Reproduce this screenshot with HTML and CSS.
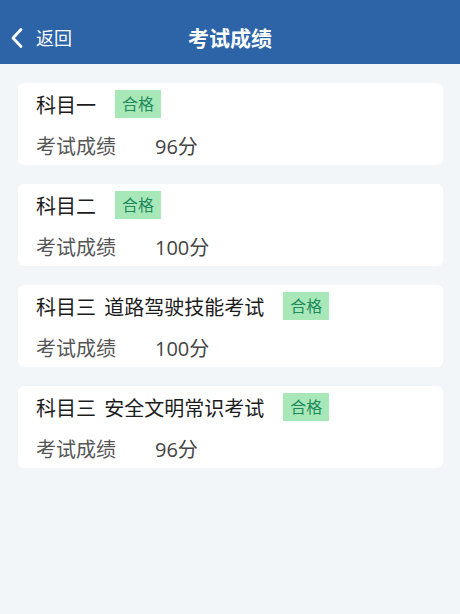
FILE: index.html
```html
<!DOCTYPE html>
<html lang="zh">
<head>
<meta charset="utf-8">
<title>考试成绩</title>
<link rel="stylesheet" href="styles.css">
</head>
<body>
<header class="topbar">
  <div class="back">
    <svg class="chev" width="16" height="22" viewBox="0 0 16 22"><path d="M12 2.5 L4 11 L12 19.5" fill="none" stroke="#fff" stroke-width="2.8" stroke-linecap="round" stroke-linejoin="round"/></svg>
    <span class="back-text">返回</span>
  </div>
  <h1 class="title">考试成绩</h1>
</header>
<main class="list">
  <section class="card">
    <div class="row1"><span class="subject">科目一</span><span class="badge">合格</span></div>
    <div class="row2"><span class="label">考试成绩</span><span class="score">96分</span></div>
  </section>
  <section class="card">
    <div class="row1"><span class="subject">科目二</span><span class="badge">合格</span></div>
    <div class="row2"><span class="label">考试成绩</span><span class="score">100分</span></div>
  </section>
  <section class="card">
    <div class="row1"><span class="subject">科目三 道路驾驶技能考试</span><span class="badge">合格</span></div>
    <div class="row2"><span class="label">考试成绩</span><span class="score">100分</span></div>
  </section>
  <section class="card">
    <div class="row1"><span class="subject">科目三 安全文明常识考试</span><span class="badge">合格</span></div>
    <div class="row2"><span class="label">考试成绩</span><span class="score">96分</span></div>
  </section>
</main>
</body>
</html>
```
FILE: styles.css
```css
html, body {
  margin: 0;
  padding: 0;
}
body {
  width: 460px;
  min-height: 614px;
  background: #f3f6f9;
  font-family: "Open Sans", "Noto Sans CJK SC", sans-serif;
}
.topbar {
  position: relative;
  height: 64px;
  background: #2d64a8;
  display: flex;
  align-items: center;
  justify-content: center;
  padding-top: 12px;
  box-sizing: border-box;
}
.back {
  position: absolute;
  left: 9px;
  top: 27px;
  display: flex;
  align-items: center;
  gap: 11px;
}
.chev {
  display: block;
}
.back-text {
  color: #fff;
  font-size: 18px;
  line-height: 22px;
}
.title {
  margin: 0;
  color: #fff;
  font-size: 21px;
  font-weight: bold;
  line-height: 28px;
}
.list {
  display: flex;
  flex-direction: column;
  gap: 19px;
  padding: 19px 17px 0 18px;
}
.card {
  background: #fff;
  border-radius: 6px;
  padding: 7px 19px 6px 18px;
  display: flex;
  flex-direction: column;
  gap: 13px;
}
.row1, .row2 {
  display: flex;
  align-items: center;
  height: 28px;
}
.subject {
  font-size: 20px;
  color: #1c1c1c;
  margin-right: 19px;
  word-spacing: 3px;
}
.badge {
  background: #a8e8b8;
  color: #1f8a5c;
  font-size: 16px;
  line-height: 28px;
  height: 28px;
  padding: 0 7px;
}
.label {
  font-size: 20px;
  color: #555;
  width: 119px;
}
.score {
  font-size: 20px;
  color: #444;
}
```
